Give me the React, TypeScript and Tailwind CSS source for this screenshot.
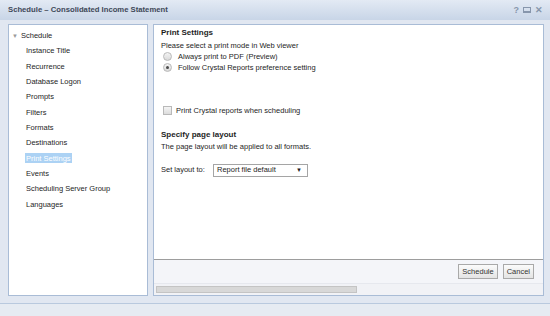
import { useState } from "react";

const NAV = [
  "Instance Title",
  "Recurrence",
  "Database Logon",
  "Prompts",
  "Filters",
  "Formats",
  "Destinations",
  "Print Settings",
  "Events",
  "Scheduling Server Group",
  "Languages",
];

function Radio({ checked }: { checked?: boolean }) {
  return (
    <span className="flex h-[9px] w-[9px] shrink-0 items-center justify-center rounded-full border border-[#b9b9b9] bg-gradient-to-b from-[#f4f4f4] to-[#d9d9d9]">
      {checked && <span className="h-[3px] w-[3px] rounded-full bg-[#4a4a4a]" />}
    </span>
  );
}

function Btn({ children }: { children: string }) {
  return (
    <button className="flex h-[15px] items-center border border-[#a9a9a9] bg-gradient-to-b from-[#fbfbfb] to-[#e4e4e4] px-[3px] leading-none text-[#333]">
      {children}
    </button>
  );
}

export default function App() {
  const [active] = useState("Print Settings");

  return (
    <div
      className="flex h-[316px] w-[550px] flex-col bg-[#e1e7f1] text-[7.5px] leading-none text-[#1e1e1e]"
      style={{ fontFamily: "'Liberation Sans', Arial, sans-serif" }}
    >
      {/* Title bar */}
      <div className="flex h-[20px] shrink-0 items-center justify-between bg-gradient-to-b from-[#e3eaf4] to-[#c8d5e7] pl-[8px] pr-[7px]">
        <span className="text-[7.7px] font-bold text-[#3e4858]">
          Schedule – Consolidated Income Statement
        </span>
        <div className="flex items-center gap-[4px] text-[#8796ac]">
          <span className="text-[9px] font-bold">?</span>
          <span className="h-[6px] w-[8px] border border-b-2 border-[#8796ac]" />
          <span className="text-[9px] font-bold">✕</span>
        </div>
      </div>

      {/* Body */}
      <div className="flex h-[276px] shrink-0 gap-[5px] pl-[8px] pr-[6px] pt-[4px]">
        {/* Left tree */}
        <div className="w-[140px] border border-[#a9bcd6] bg-white pt-[3px]">
          <div className="flex h-[15.33px] items-center pl-[3px]">
            <span className="mr-[3px] text-[6px] text-[#9a9a9a]">▼</span>
            <span>Schedule</span>
          </div>
          {NAV.map((n) => (
            <div key={n} className="flex h-[15.33px] items-center pl-[16px]">
              <span
                className={
                  n === active
                    ? "flex h-[10px] items-center bg-[#acd2f4] px-[1px] text-white"
                    : "px-[1px]"
                }
              >
                {n}
              </span>
            </div>
          ))}
        </div>

        {/* Right panel */}
        <div className="flex flex-1 flex-col border border-[#a9bcd6] bg-white">
          <div className="flex-1 border-b border-[#9d9d9d] pl-[7px] pt-[2px]">
            <div className="flex h-[12px] items-center text-[8px] font-bold">Print Settings</div>
            <div className="mt-[1px] flex h-[11px] items-center">
              Please select a print mode in Web viewer
            </div>
            <div className="flex h-[11px] items-center gap-[6px] pl-[2px]">
              <Radio />
              <span>Always print to PDF (Preview)</span>
            </div>
            <div className="flex h-[11px] items-center gap-[6px] pl-[2px]">
              <Radio checked />
              <span>Follow Crystal Reports preference setting</span>
            </div>
            <div className="mt-[32px] flex h-[11px] items-center gap-[4px] pl-[2px]">
              <span className="h-[9px] w-[9px] border border-[#b9b9b9] bg-gradient-to-b from-[#f5f5f5] to-[#dcdcdc]" />
              <span>Print Crystal reports when scheduling</span>
            </div>
            <div className="mt-[13px] flex h-[12px] items-center text-[8px] font-bold">
              Specify page layout
            </div>
            <div className="flex h-[11px] items-center">
              The page layout will be applied to all formats.
            </div>
            <div className="mt-[10px] flex h-[16px] items-center">
              <span className="w-[52px]">Set layout to:</span>
              <div className="flex h-[13px] w-[95px] items-center justify-between border border-[#a5a5a5] pl-[3px] pr-[5px]">
                <span>Report file default</span>
                <span className="text-[6px]">▼</span>
              </div>
            </div>
          </div>
          <div className="flex h-[23px] shrink-0 items-center justify-end gap-[5px] bg-[#f4f5f9] pr-[9px]">
            <Btn>Schedule</Btn>
            <Btn>Cancel</Btn>
          </div>
          <div className="flex h-[12px] shrink-0 items-center border-t border-[#e6e8ee] bg-[#f1f2f6] px-[2px]">
            <div className="h-[7px] w-[201px] border border-[#c4c4c4] bg-[#d8d8d8]" />
          </div>
        </div>
      </div>

      <div className="mt-[7px] flex-1 border-t border-[#b9c9de] bg-[#e6ebf2]" />
    </div>
  );
}
